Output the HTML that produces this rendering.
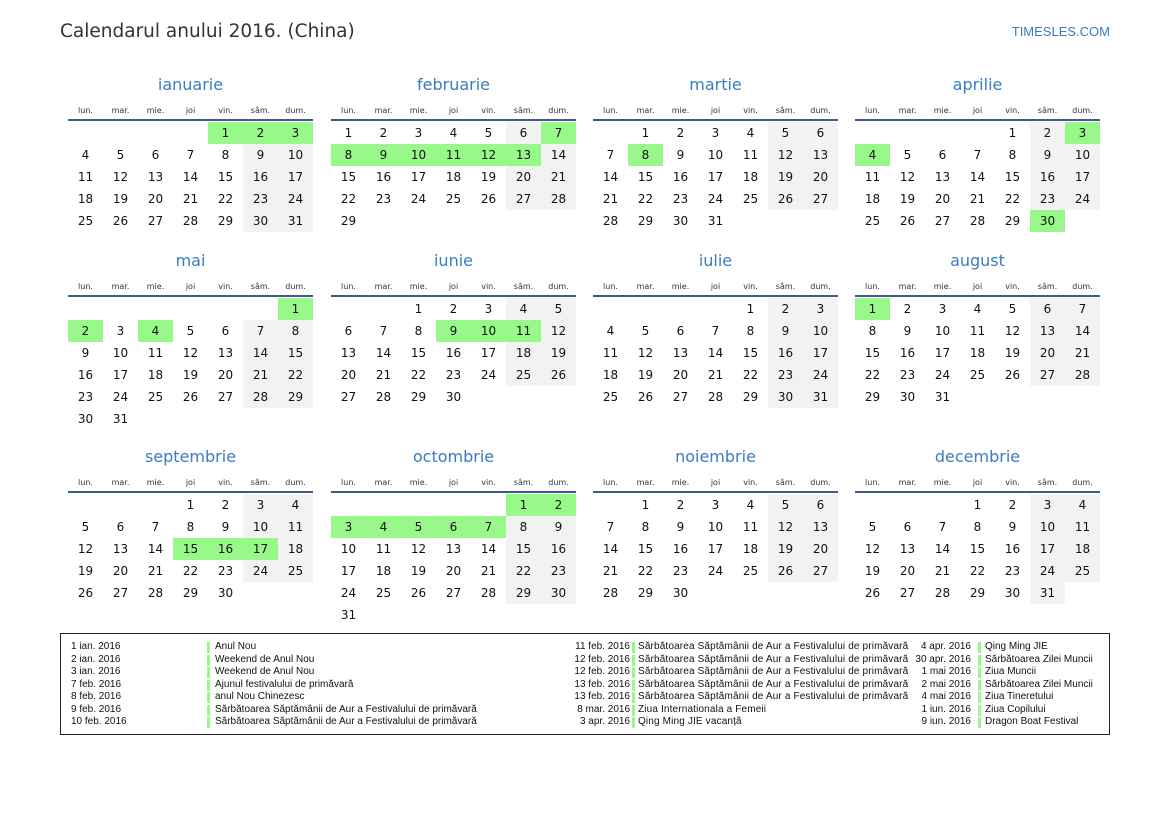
<!DOCTYPE html>
<html><head><meta charset="utf-8">
<style>
body{margin:0;width:1169px;height:827px;background:#fff;font-family:"Liberation Sans","DejaVu Sans",sans-serif;position:relative;overflow:hidden;color:#111}
.a{position:absolute;white-space:nowrap}
.t{position:absolute;width:245px;text-align:center;font-size:16px;color:#3a7cc1;font-family:"DejaVu Sans",sans-serif}
.wd{position:absolute;width:35px;text-align:center;font-size:8px;color:#333;font-family:"DejaVu Sans",sans-serif}
.rule{position:absolute;width:245px;height:2px;background:#3d5a8a}
.c{position:absolute;width:35px;height:22px;line-height:22px;text-align:center;font-size:12px;color:#111;font-family:"DejaVu Sans",sans-serif}
.g{background:#98f98a}
.w{background:#f2f2f2}
.lg{position:absolute;font-size:10px;line-height:12.5px;color:#111;white-space:nowrap}
.bar{position:absolute;width:3px;height:11px;background:#98f98a}
</style></head><body>
<div class="a" style="left:60px;top:21px;font-size:18.5px;color:#333;font-family:'DejaVu Sans',sans-serif">Calendarul anului 2016. (China)</div>
<div class="a" style="right:59px;top:24px;font-size:13px;color:#3a7cc1">TIMESLES.COM</div>
<div id="cal"></div>
<div style="position:absolute;left:60px;top:633px;width:1048px;height:100px;border:1px solid #222"></div>
<div id="leg"></div>
<script>
var names=["ianuarie","februarie","martie","aprilie","mai","iunie","iulie","august","septembrie","octombrie","noiembrie","decembrie"];
var off=[4,0,1,4,6,2,4,0,3,5,1,3];
var len=[31,29,31,30,31,30,31,31,30,31,30,31];
var hol={0:[1,2,3],1:[7,8,9,10,11,12,13],2:[8],3:[3,4,30],4:[1,2,4],5:[9,10,11],7:[1],8:[15,16,17],9:[1,2,3,4,5,6,7]};
var wds=["lun.","mar.","mie.","joi","vin.","sâm.","dum."];
var lefts=[68,331,593,855],tops=[70,246,442];
var h="";
for(var m=0;m<12;m++){
 var L=lefts[m%4],T=tops[Math.floor(m/4)];
 h+='<div class="t" style="left:'+L+'px;top:'+(T+5)+'px">'+names[m]+'</div>';
 for(var i=0;i<7;i++)h+='<div class="wd" style="left:'+(L+i*35)+'px;top:'+(T+36)+'px">'+wds[i]+'</div>';
 h+='<div class="rule" style="left:'+L+'px;top:'+(T+49)+'px"></div>';
 for(var d=1;d<=len[m];d++){
  var p=off[m]+d-1,col=p%7,row=Math.floor(p/7);
  var cls="c";
  if(hol[m]&&hol[m].indexOf(d)>=0)cls+=" g";else if(col>=5)cls+=" w";
  h+='<div class="'+cls+'" style="left:'+(L+col*35)+'px;top:'+(T+52+row*22)+'px">'+d+'</div>';
 }
}
document.getElementById("cal").innerHTML=h;
var c1=[["1 ian. 2016","Anul Nou"],["2 ian. 2016","Weekend de Anul Nou"],["3 ian. 2016","Weekend de Anul Nou"],["7 feb. 2016","Ajunul festivalului de primăvară"],["8 feb. 2016","anul Nou Chinezesc"],["9 feb. 2016","Sărbătoarea Săptămânii de Aur a Festivalului de primăvară"],["10 feb. 2016","Sărbătoarea Săptămânii de Aur a Festivalului de primăvară"]];
var S="Sărbătoarea Săptămânii de Aur a Festivalului de primăvară";
var c2=[["11 feb. 2016",S],["12 feb. 2016",S],["12 feb. 2016",S],["13 feb. 2016",S],["13 feb. 2016",S],["8 mar. 2016","Ziua Internationala a Femeii"],["3 apr. 2016","Qing Ming JIE vacanță"]];
var c3=[["4 apr. 2016","Qing Ming JIE"],["30 apr. 2016","Sărbătoarea Zilei Muncii"],["1 mai 2016","Ziua Muncii"],["2 mai 2016","Sărbătoarea Zilei Muncii"],["4 mai 2016","Ziua Tineretului"],["1 iun. 2016","Ziua Copilului"],["9 iun. 2016","Dragon Boat Festival"]];
var g="";
for(var i=0;i<7;i++){
 var y=641+i*12.5;
 g+='<div class="lg" style="left:71px;top:'+y+'px">'+c1[i][0]+'</div>';
 g+='<div class="bar" style="left:207px;top:'+(y+1)+'px"></div>';
 g+='<div class="lg" style="left:215px;top:'+y+'px">'+c1[i][1]+'</div>';
 g+='<div class="lg" style="right:'+(1169-630)+'px;top:'+y+'px">'+c2[i][0]+'</div>';
 g+='<div class="bar" style="left:632px;top:'+(y+1)+'px"></div>';
 g+='<div class="lg" style="left:638px;top:'+y+'px;letter-spacing:0.15px">'+c2[i][1]+'</div>';
 g+='<div class="lg" style="right:'+(1169-971)+'px;top:'+y+'px">'+c3[i][0]+'</div>';
 g+='<div class="bar" style="left:978px;top:'+(y+1)+'px"></div>';
 g+='<div class="lg" style="left:985px;top:'+y+'px">'+c3[i][1]+'</div>';
}
document.getElementById("leg").innerHTML=g;
</script>
</body></html>
